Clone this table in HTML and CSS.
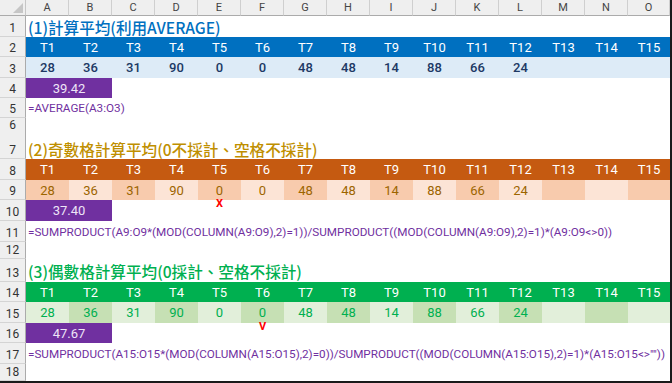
FILE: index.html
```html
<!DOCTYPE html>
<html lang="zh-Hant">
<head>
<meta charset="utf-8">
<title>計算平均</title>
<link rel="stylesheet" href="styles.css">
</head>
<body>
<div class="sheet">
  <div class="row hdr">
    <div class="corner"></div>
    <div class="ch">A</div><div class="ch">B</div><div class="ch">C</div><div class="ch">D</div><div class="ch">E</div>
    <div class="ch">F</div><div class="ch">G</div><div class="ch">H</div><div class="ch">I</div><div class="ch">J</div>
    <div class="ch">K</div><div class="ch">L</div><div class="ch">M</div><div class="ch">N</div><div class="ch">O</div>
  </div>

  <div class="row h21"><div class="rh">1</div><div class="title blue-t">(1)計算平均(利用AVERAGE)</div></div>
  <div class="row h20 head blue-h">
    <div class="rh">2</div>
    <div>T1</div><div>T2</div><div>T3</div><div>T4</div><div>T5</div><div>T6</div><div>T7</div><div>T8</div>
    <div>T9</div><div>T10</div><div>T11</div><div>T12</div><div>T13</div><div>T14</div><div>T15</div>
  </div>
  <div class="row h21 data blue-d">
    <div class="rh">3</div>
    <div>28</div><div>36</div><div>31</div><div>90</div><div>0</div><div>0</div><div>48</div><div>48</div>
    <div>14</div><div>88</div><div>66</div><div>24</div><div></div><div></div><div></div>
  </div>
  <div class="row h20"><div class="rh">4</div><div class="avg">39.42</div></div>
  <div class="row h20"><div class="rh">5</div><div class="formula">=AVERAGE(A3:O3)</div></div>
  <div class="row h13"><div class="rh">6</div></div>

  <div class="row h28"><div class="rh">7</div><div class="title gold-t">(2)奇數格計算平均(0不採計、空格不採計)</div></div>
  <div class="row h21 head orange-h">
    <div class="rh">8</div>
    <div>T1</div><div>T2</div><div>T3</div><div>T4</div><div>T5</div><div>T6</div><div>T7</div><div>T8</div>
    <div>T9</div><div>T10</div><div>T11</div><div>T12</div><div>T13</div><div>T14</div><div>T15</div>
  </div>
  <div class="row h20 data orange-d">
    <div class="rh">9</div>
    <div>28</div><div>36</div><div>31</div><div>90</div><div class="mark">0<span class="flag">X</span></div><div>0</div><div>48</div><div>48</div>
    <div>14</div><div>88</div><div>66</div><div>24</div><div></div><div></div><div></div>
  </div>
  <div class="row h21"><div class="rh">10</div><div class="avg">37.40</div></div>
  <div class="row h21"><div class="rh">11</div><div class="formula">=SUMPRODUCT(A9:O9*(MOD(COLUMN(A9:O9),2)=1))/SUMPRODUCT((MOD(COLUMN(A9:O9),2)=1)*(A9:O9&lt;&gt;0))</div></div>
  <div class="row h17"><div class="rh">12</div></div>

  <div class="row h23"><div class="rh">13</div><div class="title green-t">(3)偶數格計算平均(0採計、空格不採計)</div></div>
  <div class="row h20 head green-h">
    <div class="rh">14</div>
    <div>T1</div><div>T2</div><div>T3</div><div>T4</div><div>T5</div><div>T6</div><div>T7</div><div>T8</div>
    <div>T9</div><div>T10</div><div>T11</div><div>T12</div><div>T13</div><div>T14</div><div>T15</div>
  </div>
  <div class="row h21 data green-d">
    <div class="rh">15</div>
    <div>28</div><div>36</div><div>31</div><div>90</div><div>0</div><div class="mark">0<span class="flag">V</span></div><div>48</div><div>48</div>
    <div>14</div><div>88</div><div>66</div><div>24</div><div></div><div></div><div></div>
  </div>
  <div class="row h20"><div class="rh">16</div><div class="avg">47.67</div></div>
  <div class="row h21"><div class="rh">17</div><div class="formula">=SUMPRODUCT(A15:O15*(MOD(COLUMN(A15:O15),2)=0))/SUMPRODUCT((MOD(COLUMN(A15:O15),2)=1)*(A15:O15&lt;&gt;""))</div></div>
  <div class="row h17"><div class="rh">18</div></div>
</div>
</body>
</html>
```
FILE: styles.css
```css
* { box-sizing: border-box; margin: 0; padding: 0; }

html, body {
  width: 672px;
  height: 383px;
  overflow: hidden;
  background: #ffffff;
}

body {
  font-family: Roboto, "Noto Sans CJK TC", sans-serif;
  color: #222;
}

.sheet {
  width: 672px;
  height: 383px;
  border-right: 2px solid #1a1a1a;
  border-bottom: 2px solid #1a1a1a;
  display: flex;
  flex-direction: column;
  overflow: hidden;
}

.row {
  display: grid;
  grid-template-columns: 26px repeat(14, 43px) 42px;
  flex: none;
}

.hdr { height: 16px; }
.h13 { height: 13px; }
.h17 { height: 17px; }
.h20 { height: 20px; }
.h21 { height: 21px; }
.h23 { height: 23px; }
.h28 { height: 28px; }

.corner {
  background: #efefef;
  border-right: 1px solid #c6c6c6;
  border-bottom: 1px solid #ababab;
  position: relative;
}
.corner::after {
  content: "";
  position: absolute;
  right: 2px;
  bottom: 2px;
  border-left: 10px solid transparent;
  border-bottom: 10px solid #c6c6c6;
}

.ch {
  background: #efefef;
  border-right: 1px solid #cfcfcf;
  border-bottom: 1px solid #ababab;
  font-size: 11px;
  color: #444;
  display: flex;
  align-items: center;
  justify-content: center;
}

.rh {
  background: #efefef;
  border-right: 1px solid #ababab;
  border-bottom: 1px solid #d4d4d4;
  font-size: 12px;
  color: #333;
  display: flex;
  align-items: flex-end;
  justify-content: center;
  padding-bottom: 1px;
  grid-column: 1;
}

.title {
  grid-column: 2 / -1;
  font-family: "Noto Sans CJK TC", sans-serif;
  font-size: 15.6px;
  font-weight: 500;
  padding-left: 2px;
  display: flex;
  align-items: flex-end;
  white-space: nowrap;
  line-height: 20px;
}
.blue-t { color: #0070c0; }
.gold-t { color: #bf8f00; }
.green-t { color: #00b050; padding-bottom: 1px; }

.head > div:not(.rh),
.data > div:not(.rh) {
  display: flex;
  align-items: center;
  justify-content: center;
  font-size: 13px;
}

.head > div:not(.rh) { color: #ffffff; }
.blue-h > div:not(.rh) { background: #0070c0; }
.orange-h > div:not(.rh) { background: #c55a11; }
.green-h > div:not(.rh) { background: #00b050; }

.blue-d > div:not(.rh) {
  background: #ddebf7;
  color: #203864;
  font-weight: 500;
}
.orange-d > div:not(.rh) { color: #9c6500; }
.orange-d > div:nth-child(even) { background: #f8cbad; }
.orange-d > div:nth-child(odd):not(.rh) { background: #fce4d6; }
.green-d > div:not(.rh) { color: #00b050; }
.green-d > div:nth-child(even) { background: #e2efda; }
.green-d > div:nth-child(odd):not(.rh) { background: #c6e0b4; }

.mark { position: relative; }
.flag {
  position: absolute;
  left: 0;
  right: 0;
  bottom: -9px;
  text-align: center;
  color: #ff0000;
  font-size: 11px;
  font-weight: 700;
  line-height: 10px;
}

.avg {
  grid-column: 2 / 4;
  background: #7030a0;
  color: #eee4f7;
  font-size: 13px;
  display: flex;
  align-items: center;
  justify-content: center;
}

.formula {
  grid-column: 2 / -1;
  color: #7030a0;
  font-size: 11.7px;
  padding-left: 2px;
  white-space: nowrap;
  display: flex;
  align-items: center;
}
```
